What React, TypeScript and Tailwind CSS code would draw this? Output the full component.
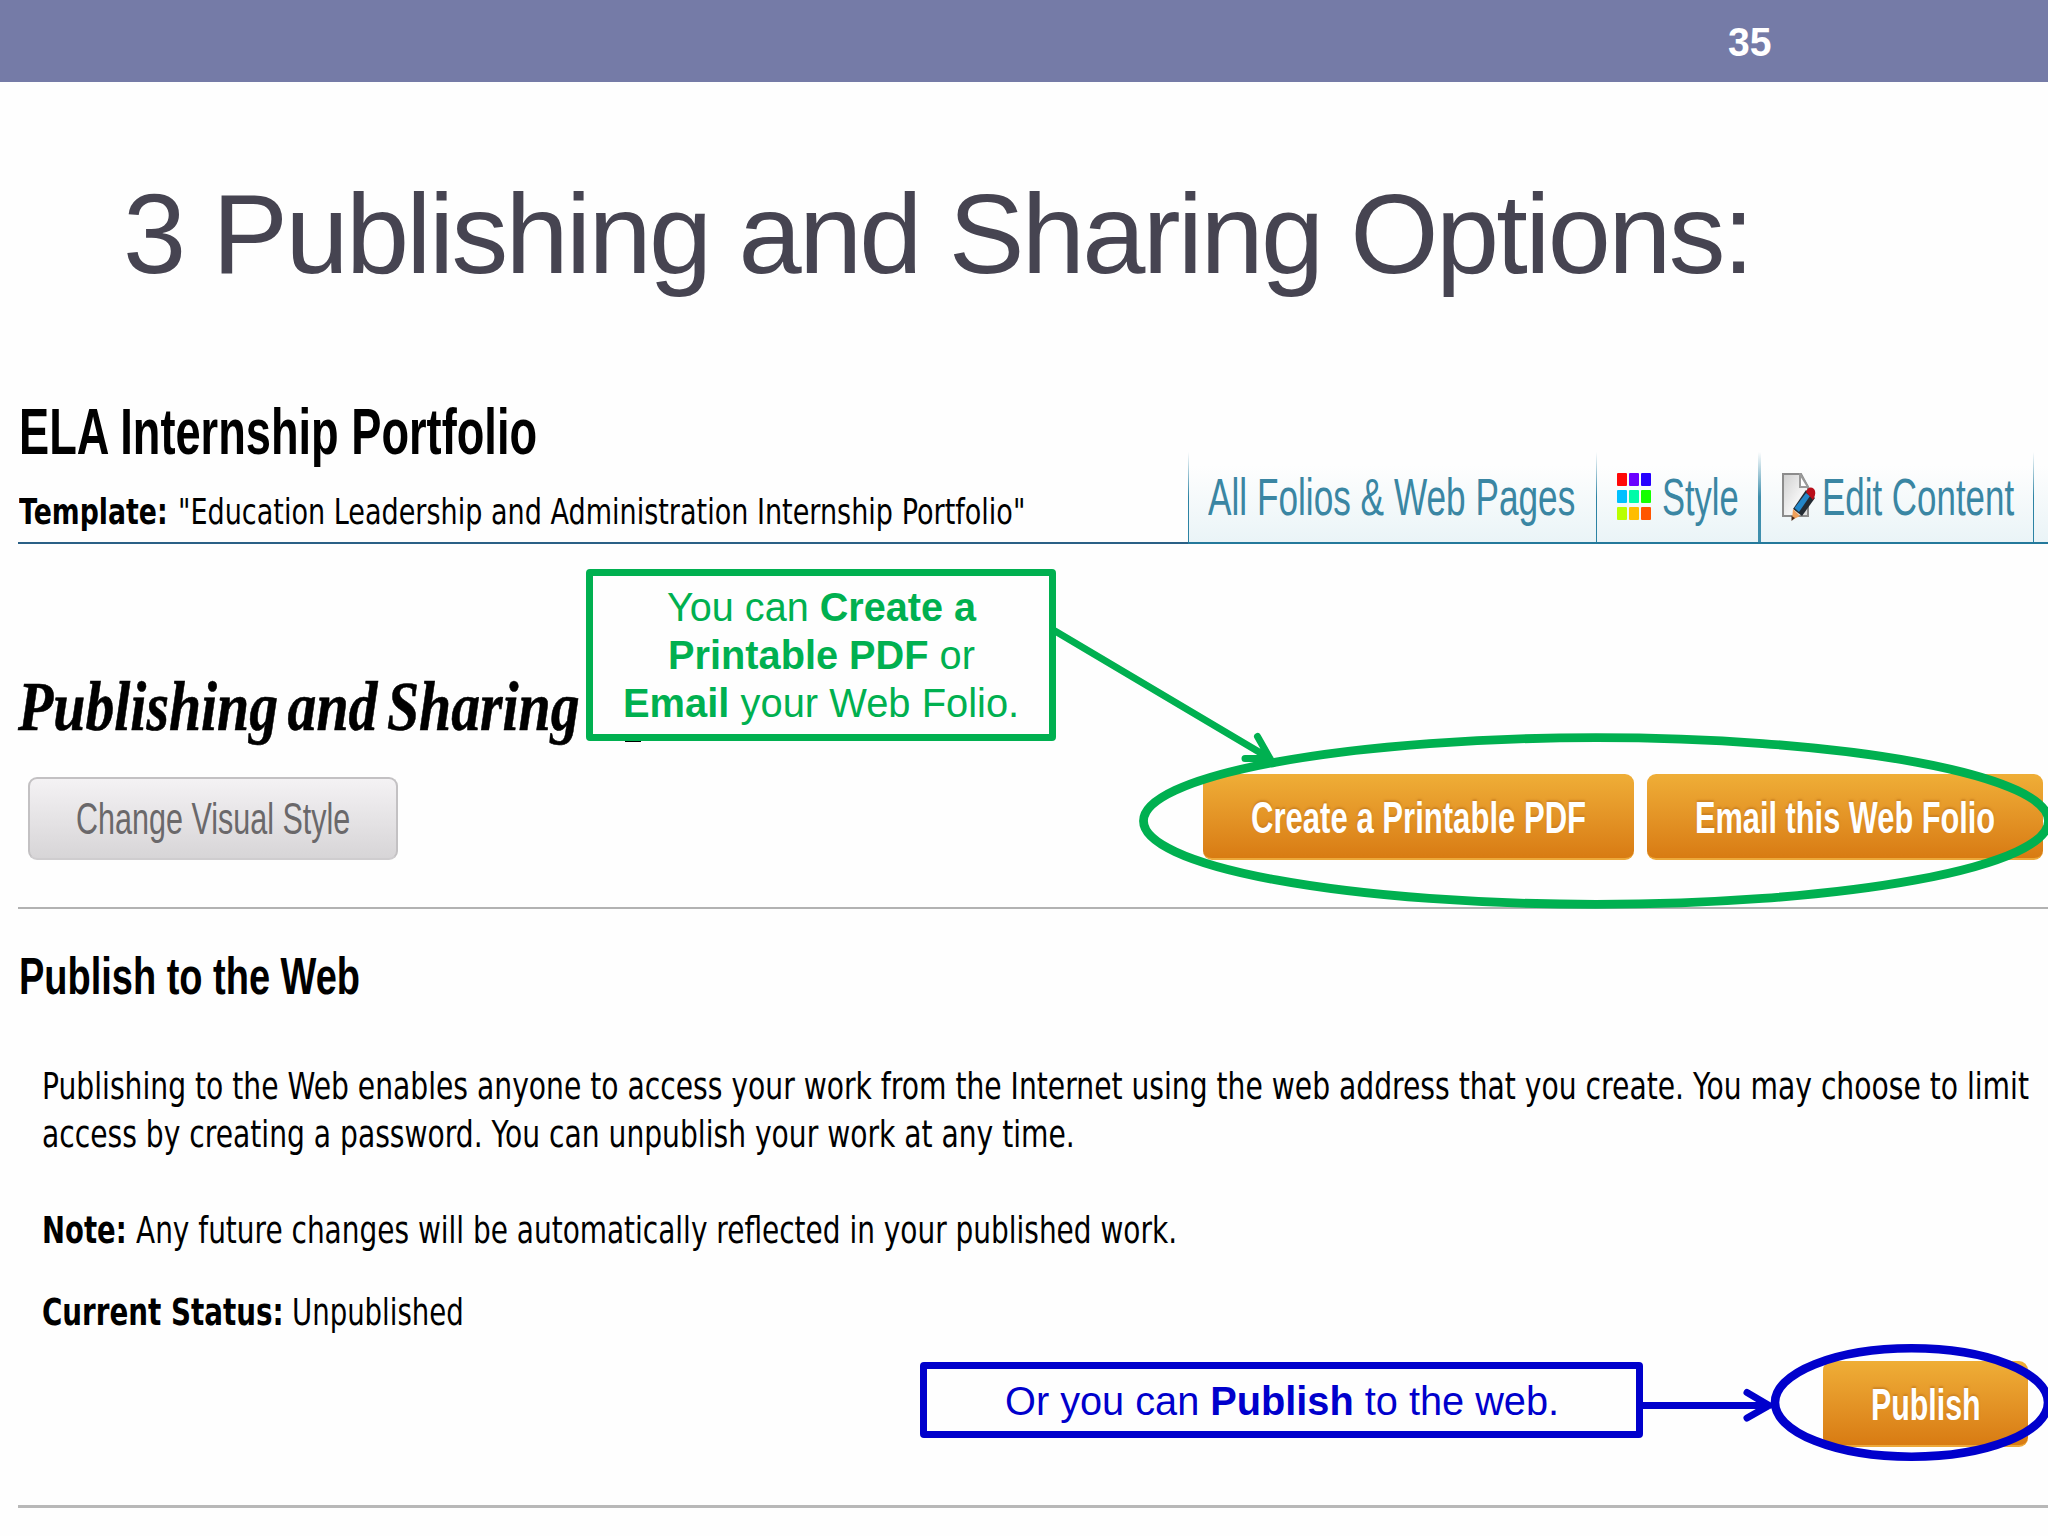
import { useLayoutEffect, useRef, type ReactNode } from "react";
import clsx from "clsx";

const SWATCHES = [
  "bg-[#ff0808]", "bg-[#6a00ff]", "bg-[#2600ff]",
  "bg-[#00c0ff]", "bg-[#00fba8]", "bg-[#14ff00]",
  "bg-[#b9ff00]", "bg-[#ffbd00]", "bg-[#ff5500]",
];

// Condenses a single line of text so that it fills the width of its box
function Condensed({ className, children }: { className?: string; children: ReactNode }) {
  const box = useRef<HTMLSpanElement>(null);
  const text = useRef<HTMLSpanElement>(null);

  useLayoutEffect(() => {
    if (!box.current || !text.current) return;
    const ratio = box.current.clientWidth / text.current.offsetWidth;
    text.current.style.transform = `scaleX(${ratio})`;
  }, []);

  return (
    <span ref={box} className={clsx("block shrink-0", className)}>
      <span ref={text} className="block w-max origin-left whitespace-pre">
        {children}
      </span>
    </span>
  );
}

function OrangeButton({ className, children }: { className?: string; children: ReactNode }) {
  return (
    <button
      className={clsx(
        "flex h-[86px] shrink-0 items-center rounded-[9px] border-b-2 border-[#eda93a] bg-linear-to-b from-[#efae37] to-[#d87b12] pt-[4px] text-left text-[45px] leading-[60px] font-bold text-white [text-shadow:0_-2px_2px_#b8701c80]",
        className
      )}
    >
      {children}
    </button>
  );
}

function StyleIcon() {
  return (
    <div className="grid h-[47px] w-[34px] shrink-0 grid-cols-3 gap-x-[2px] gap-y-[4px]">
      {SWATCHES.map((color) => (
        <span key={color} className={clsx("rounded-[1px]", color)} />
      ))}
    </div>
  );
}

function EditIcon() {
  return (
    <svg className="h-[48px] w-[34px] shrink-0" viewBox="0 0 34 48" fill="none">
      <defs>
        <linearGradient id="sheet" x1="0" y1="0" x2="1" y2="1">
          <stop offset="0" stopColor="#cfcfcf" />
          <stop offset="0.6" stopColor="#f4f4f4" />
          <stop offset="1" stopColor="#d8d8d8" />
        </linearGradient>
      </defs>
      <path d="M1 1H19L26 14V43H1Z" fill="url(#sheet)" stroke="#8c8c8c" strokeWidth="2" />
      <path d="M18 1V14H26Z" fill="#fff" stroke="#9a9a9a" strokeWidth="2" />
      <path d="M24 17L33 25L20 43L11 36Z" fill="#232b33" />
      <path d="M24 20L28 23L17 39L12.500 35Z" fill="#2386c8" />
      <path d="M24 19Q27 12 32 16Q35 20 31 27Z" fill="#b90f1b" />
      <path d="M11 36L18 43L10 47Z" fill="#f0a05a" />
      <path d="M9.500 43L13 45L9.500 48Z" fill="#4a2a18" />
    </svg>
  );
}

function Tabs() {
  return (
    <nav className="flex h-[92px] w-[860px] shrink-0 border-b-2 border-[#24799b] bg-linear-to-b from-[#fefefe] from-15% to-[#eaf4f7] text-[52px] leading-[60px] text-[#3a86a3]">
      <div className="h-full w-px bg-linear-to-b from-transparent to-[#2c83a4] to-50%" />
      <a className="flex w-[407px] items-center pl-[19px]">
        <Condensed className="w-[367px]">All Folios &amp; Web Pages</Condensed>
      </a>
      <div className="h-full w-px bg-linear-to-b from-transparent to-[#2c83a4] to-50%" />
      <a className="flex w-[161px] items-center gap-[11px] pb-[2px] pl-[20px]">
        <StyleIcon />
        <Condensed className="w-[77px] pt-[2px]">Style</Condensed>
      </a>
      <div className="h-full w-[3px] bg-linear-to-b from-transparent to-[#3f8fad] to-50%" />
      <a className="flex w-[272px] items-center gap-[6px] pl-[21px]">
        <EditIcon />
        <Condensed className="w-[192px]">Edit Content</Condensed>
      </a>
      <div className="h-full w-px bg-linear-to-b from-transparent to-[#2c83a4] to-50%" />
    </nav>
  );
}

function Annotations() {
  return (
    <>
      <div className="absolute top-[735px] left-[625px] h-[7px] w-[16px] bg-black" />
      <div className="absolute top-[569px] left-[586px] flex h-[172px] w-[470px] flex-col items-center justify-center rounded-[4px] border-[7px] border-[#00b050] bg-[#fefefe] text-[40px] leading-[48px] text-[#00b050]">
        <Condensed className="w-[309px]">
          You can <b>Create a</b>
        </Condensed>
        <Condensed className="w-[307px]">
          <b>Printable PDF</b> or
        </Condensed>
        <Condensed className="w-[396px]">
          <b>Email</b> your Web Folio.
        </Condensed>
      </div>
      <div className="absolute top-[1362px] left-[920px] flex h-[76px] w-[723px] items-center justify-center rounded-[4px] border-[7px] border-[#0000cc] bg-[#fefefe] pt-[2px] text-[40px] leading-[48px] text-[#0000cc]">
        <Condensed className="w-[554px]">
          Or you can <b>Publish</b> to the web.
        </Condensed>
      </div>
      <svg className="absolute inset-0 h-[1536px] w-[2048px]" viewBox="0 0 2048 1536" fill="none" strokeWidth="7" strokeLinecap="round">
        <g stroke="#00b050">
          <path d="M1055 631L1270 758.500M1257.500 736.500L1270 758.500H1245" />
          <ellipse cx="1596" cy="821" rx="452.500" ry="83.300" strokeWidth="8.800" />
        </g>
        <g stroke="#0000cc">
          <path d="M1643 1405.500H1769M1747 1392.500L1769 1405.500L1747 1418" />
          <ellipse cx="1911.500" cy="1402.500" rx="136.500" ry="54.200" strokeWidth="8.600" />
        </g>
      </svg>
    </>
  );
}

export default function App() {
  return (
    <div className="relative flex h-[1536px] w-[2048px] flex-col overflow-hidden bg-[#fefefe] font-['Liberation_Sans',Arial,sans-serif] text-black">
      <header className="flex h-[82px] shrink-0 items-center bg-[#757ba7] pt-[2px] pl-[1728px] text-[40px] leading-none font-bold text-white">
        <Condensed className="w-[44px]">35</Condensed>
      </header>

      <h1 className="mt-[82px] mb-[-2px] pl-[123px] text-[114px] leading-[140px] tracking-[-2.700px] text-[#464451]">
        <Condensed className="w-[1629px]">3 Publishing and Sharing Options:</Condensed>
      </h1>

      <section className="flex h-[242px] shrink-0 items-end pl-[18px]">
        <div className="h-full w-[1170px] shrink-0 border-b-2 border-[#2a6086] pt-[90px]">
          <h2 className="pl-px text-[65px] leading-[80px] font-bold">
            <Condensed className="w-[518px]">ELA Internship Portfolio</Condensed>
          </h2>
          <p className="mt-[20px] flex gap-[10px] pl-px font-['DejaVu_Sans',sans-serif] text-[35px] leading-[40px]">
            <Condensed className="w-[149px] font-bold">Template:</Condensed>
            <Condensed className="w-[847px]">"Education Leadership and Administration Internship Portfolio"</Condensed>
          </p>
        </div>
        <Tabs />
      </section>

      <h2 className="mt-[123px] mb-[-2px] pl-[18px] font-['Liberation_Serif',serif] text-[70px] leading-[80px] font-bold [word-spacing:-6px] italic [-webkit-text-stroke:0.600px_black]">
        <Condensed className="w-[562px]">Publishing and Sharing</Condensed>
      </h2>

      <div className="mt-[29px] flex h-[86px] shrink-0 items-end pl-[28px]">
        <button className="flex h-[83px] w-[370px] shrink-0 items-center rounded-[9px] border-2 border-[#c3c1c3] border-b-[#cfcdcf] bg-linear-to-b from-[#f4f2f4] to-[#d7d5d7] pl-[46px] text-left text-[45px] leading-[60px] text-[#6a686a]">
          <Condensed className="w-[274px]">Change Visual Style</Condensed>
        </button>
        <OrangeButton className="ml-[805px] w-[431px] pl-[48px]">
          <Condensed className="w-[335px]">Create a Printable PDF</Condensed>
        </OrangeButton>
        <OrangeButton className="ml-[13px] w-[396px] pl-[48px]">
          <Condensed className="w-[300px]">Email this Web Folio</Condensed>
        </OrangeButton>
      </div>

      <hr className="mt-[47px] ml-[18px] border-t-2 border-[#b2b2b2]" />

      <h3 className="mt-[37px] pl-[19px] text-[52px] leading-[60px] font-bold">
        <Condensed className="w-[341px]">Publish to the Web</Condensed>
      </h3>

      <div className="mt-[56px] pl-[42px] font-['DejaVu_Sans',sans-serif] text-[37.500px] leading-[48px]">
        <Condensed className="w-[1987px]">
          Publishing to the Web enables anyone to access your work from the Internet using the web address that you create. You may choose to limit
        </Condensed>
        <Condensed className="w-[1033px]">access by creating a password. You can unpublish your work at any time.</Condensed>
        <p className="mt-[48px] flex gap-[9px]">
          <Condensed className="w-[85px] font-bold">Note:</Condensed>
          <Condensed className="w-[1041px]">Any future changes will be automatically reflected in your published work.</Condensed>
        </p>
        <p className="mt-[34px] flex gap-[8px]">
          <Condensed className="w-[242px] font-bold">Current Status:</Condensed>
          <Condensed className="w-[172px]">Unpublished</Condensed>
        </p>
      </div>

      <div className="mt-[25px] flex h-[86px] shrink-0 justify-end pr-[20px]">
        <OrangeButton className="w-[205px] pl-[48px]">
          <Condensed className="w-[110px]">Publish</Condensed>
        </OrangeButton>
      </div>

      <hr className="mt-[58px] ml-[18px] border-t-[3px] border-[#b8b8b8]" />

      <Annotations />
    </div>
  );
}
